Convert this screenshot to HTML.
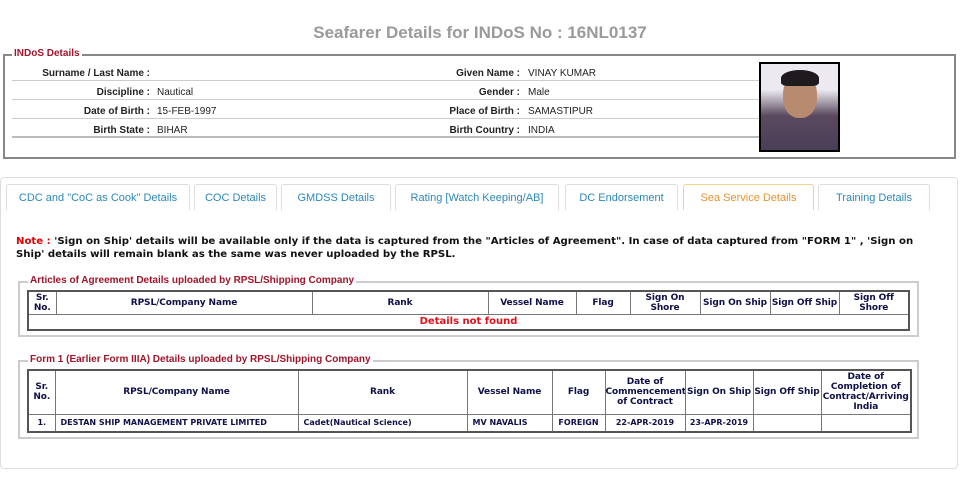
<!DOCTYPE html>
<html><head><meta charset="utf-8"><style>
*{box-sizing:border-box;margin:0;padding:0}
body{width:965px;height:477px;background:#fff;position:relative;font-family:"Liberation Sans",Arial,sans-serif;overflow:hidden}
.abs{position:absolute}
.title{left:0;width:960px;top:23px;text-align:center;font-size:17px;font-weight:bold;color:#9a9a9a}
.fs{border:2px solid #888}
.lg{background:#fff;padding:0 2px;font-size:10px;font-weight:bold;color:#a0152a;line-height:11px}
.row{left:12px;width:748px;height:19px;border-bottom:1px solid #ccc;font-size:10px;color:#222}
.row span{position:absolute;top:6px}
.lb{font-weight:bold;text-align:right}
.tabs .t{position:absolute;top:184px;height:26px;border:1px solid #ddd;border-bottom:none;border-radius:3px 3px 0 0;font-size:11px;color:#2b88b8;text-align:center;line-height:26px;background:#fff}
.note{left:16px;top:235px;width:905px;font-family:"DejaVu Sans",Verdana,sans-serif;font-size:10.15px;font-weight:bold;line-height:13px;color:#111}
.fs2{border:2px solid #ccc}
table{border-collapse:collapse;table-layout:fixed;font-family:"DejaVu Sans",Verdana,sans-serif;position:absolute;border:2px solid #555}
td,th{border:1px solid #777;text-align:center;color:#101048;font-weight:bold;padding:0;white-space:nowrap;overflow:hidden}
th{font-size:9px;line-height:10px;letter-spacing:-0.1px}
td{font-size:8px}
</style></head><body>
<div class="abs title">Seafarer Details for INDoS No : 16NL0137</div>

<div class="abs fs" style="left:3px;top:54px;width:953px;height:105px"></div>
<div class="abs lg" style="left:12px;top:48px">INDoS Details</div>
<div class="abs row" style="top:62px"><span class="lb" style="right:610px">Surname / Last Name :</span><span class="lb" style="left:340px;width:168px">Given Name :</span><span style="left:516px">VINAY KUMAR</span></div>
<div class="abs row" style="top:81px"><span class="lb" style="right:610px">Discipline :</span><span style="left:145px">Nautical</span><span class="lb" style="left:340px;width:168px">Gender :</span><span style="left:516px">Male</span></div>
<div class="abs row" style="top:100px"><span class="lb" style="right:610px">Date of Birth :</span><span style="left:145px">15-FEB-1997</span><span class="lb" style="left:340px;width:168px">Place of Birth :</span><span style="left:516px">SAMASTIPUR</span></div>
<div class="abs row" style="top:119px;border-bottom:2px solid #bbb"><span class="lb" style="right:610px">Birth State :</span><span style="left:145px">BIHAR</span><span class="lb" style="left:340px;width:168px">Birth Country :</span><span style="left:516px">INDIA</span></div>
<div class="abs" style="left:759px;top:62px;width:81px;height:90px;border:2px solid #000;background:linear-gradient(#eceaf0 0,#eceaf0 30%,#5a4a5e 60%,#4a3e58 100%)">
<div class="abs" style="left:22px;top:10px;width:34px;height:44px;border-radius:45%;background:#b88a70"></div>
<div class="abs" style="left:20px;top:6px;width:38px;height:16px;border-radius:50% 50% 20% 20%;background:#1e1a1e"></div>
</div>

<div class="abs" style="left:0;top:177px;width:958px;height:292px;border:1px solid #ddd;border-radius:4px"></div>
<div class="tabs">
<div class="t" style="left:6px;width:184px">CDC and "CoC as Cook" Details</div>
<div class="t" style="left:194px;width:83px">COC Details</div>
<div class="t" style="left:281px;width:110px">GMDSS Details</div>
<div class="t" style="left:395px;width:164px">Rating [Watch Keeping/AB]</div>
<div class="t" style="left:565px;width:113px">DC Endorsement</div>
<div class="t" style="left:683px;width:131px;border-color:#f3d28a;color:#e8912f">Sea Service Details</div>
<div class="t" style="left:818px;width:112px">Training Details</div>
</div>

<div class="abs note"><span style="color:#d00">Note :</span> 'Sign on Ship' details will be available only if the data is captured from the "Articles of Agreement". In case of data captured from "FORM 1" , 'Sign on Ship' details will remain blank as the same was never uploaded by the RPSL.</div>

<div class="abs fs2" style="left:18px;top:281px;width:901px;height:56px"></div>
<div class="abs lg" style="left:28px;top:275px">Articles of Agreement Details uploaded by RPSL/Shipping Company</div>
<table style="left:27px;top:290px;width:883px">
<colgroup><col style="width:28px"><col style="width:256px"><col style="width:176px"><col style="width:88px"><col style="width:54px"><col style="width:70px"><col style="width:70px"><col style="width:69px"><col style="width:70px"></colgroup>
<tr style="height:23px"><th>Sr.<br>No.</th><th>RPSL/Company Name</th><th>Rank</th><th>Vessel Name</th><th>Flag</th><th>Sign On<br>Shore</th><th>Sign On Ship</th><th>Sign Off Ship</th><th>Sign Off<br>Shore</th></tr>
<tr style="height:16px"><td colspan="9" style="color:#e0101a;font-size:10px">Details not found</td></tr>
</table>

<div class="abs fs2" style="left:18px;top:360px;width:901px;height:79px"></div>
<div class="abs lg" style="left:28px;top:354px">Form 1 (Earlier Form IIIA) Details uploaded by RPSL/Shipping Company</div>
<table style="left:27px;top:369px;width:883px">
<colgroup><col style="width:27px"><col style="width:243px"><col style="width:169px"><col style="width:85px"><col style="width:53px"><col style="width:80px"><col style="width:68px"><col style="width:68px"><col style="width:90px"></colgroup>
<tr style="height:44px"><th>Sr.<br>No.</th><th>RPSL/Company Name</th><th>Rank</th><th>Vessel Name</th><th>Flag</th><th>Date of<br>Commencement<br>of Contract</th><th>Sign On Ship</th><th>Sign Off Ship</th><th>Date of<br>Completion of<br>Contract/Arriving<br>India</th></tr>
<tr style="height:18px"><td>1.</td><td style="text-align:left;padding-left:5px">DESTAN SHIP MANAGEMENT PRIVATE LIMITED</td><td style="text-align:left;padding-left:5px">Cadet(Nautical Science)</td><td style="text-align:left;padding-left:5px">MV NAVALIS</td><td>FOREIGN</td><td>22-APR-2019</td><td>23-APR-2019</td><td></td><td></td></tr>
</table>
</body></html>
